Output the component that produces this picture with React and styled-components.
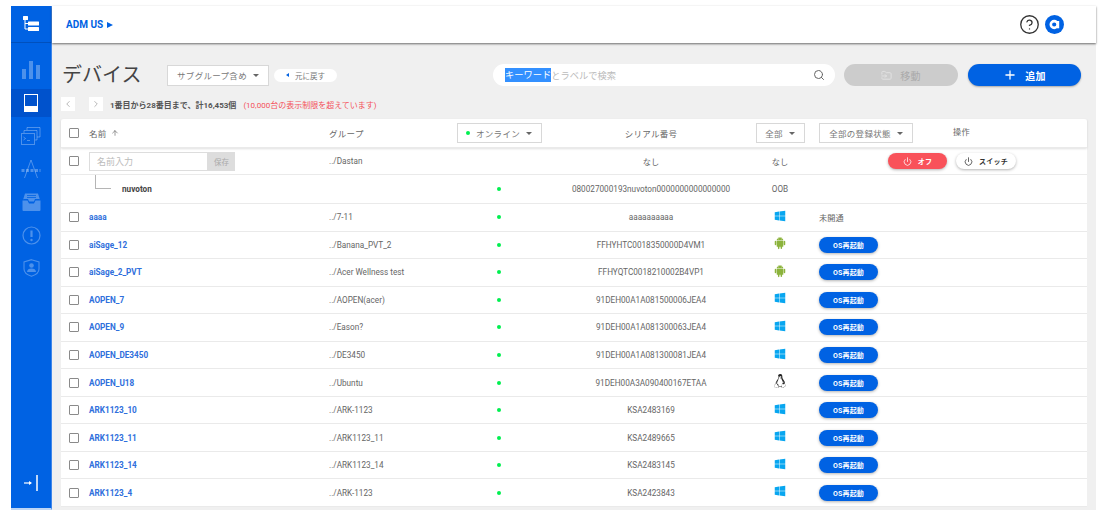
import React from "react";
import styled, { createGlobalStyle } from "styled-components";
import { Search, Plus, Power, ChevronLeft, ChevronRight, ArrowUp, CircleHelp, FolderInput } from "lucide-react";
import { FaWindows, FaLinux } from "react-icons/fa";
import { AiFillAndroid } from "react-icons/ai";

const GlobalStyle = createGlobalStyle`
  html, body { margin: 0; padding: 0; background: #fff; }
  * { box-sizing: border-box; }
  body { font-family: Roboto, "Noto Sans CJK JP", sans-serif; color: #555; }
`;

const Frame = styled.div`
  width: 1111px;
  height: 524px;
  padding: 6px 15px 14px 11px;
  display: flex;
  overflow: hidden;
`;

const Sidebar = styled.aside`
  width: 41px;
  flex: none;
  background: #0062e3;
  border-right: 1px solid #3f86ea;
  border-bottom: 2px solid #bcd5f5;
  display: flex;
  flex-direction: column;
  color: #fff;
`;

const SideHead = styled.div`
  height: 37px;
  flex: none;
  display: flex;
  align-items: center;
  justify-content: center;
  border-bottom: 1px solid #0050bd;
`;

const SideNav = styled.nav`
  padding-top: 13px;
  display: flex;
  flex-direction: column;
  gap: 5px;
  flex: 1;
`;

const SideItem = styled.div`
  height: 28px;
  display: flex;
  align-items: center;
  justify-content: center;
  background: ${(p) => (p.$active ? "#0052cc" : "transparent")};
  color: ${(p) => (p.$active ? "#fff" : "rgba(255,255,255,0.3)")};
`;

const Collapse = styled.div`
  height: 33px;
  display: flex;
  align-items: flex-start;
  justify-content: center;
`;

const Content = styled.div`
  flex: 1;
  display: flex;
  flex-direction: column;
  background: #f0f0f0;
  min-width: 0;
`;

const TopBar = styled.header`
  height: 37px;
  flex: none;
  background: #fff;
  box-shadow: 0 1px 2px rgba(0, 0, 0, 0.55);
  display: flex;
  align-items: center;
  padding: 0 32px 0 14px;
  position: relative;
`;

const Crumb = styled.div`
  font-size: 10px;
  font-weight: 700;
  color: #0062e3;
  display: flex;
  align-items: center;
  gap: 4px;
`;

const Triangle = styled.span`
  width: 0;
  height: 0;
  border-left: 6px solid #0062e3;
  border-top: 3px solid transparent;
  border-bottom: 3px solid transparent;
`;

const TopIcons = styled.div`
  margin-left: auto;
  display: flex;
  align-items: center;
  gap: 5px;
  color: #333;
`;

const Main = styled.main`
  flex: 1;
  padding: 21px 9px 3px;
  display: flex;
  flex-direction: column;
  min-height: 0;
`;

const Toolbar = styled.div`
  height: 22px;
  flex: none;
  display: flex;
  align-items: center;
  padding-left: 1px;
  padding-right: 6px;
`;

const Title = styled.h1`
  margin: 0 26px 0 0;
  width: 79px;
  font-size: 20px;
  font-weight: 400;
  color: #444;
  white-space: nowrap;
  line-height: 22px;
`;

const Select = styled.div`
  height: ${(p) => p.$h || 20}px;
  width: ${(p) => p.$w}px;
  flex: none;
  background: #fff;
  border: 1px solid #d8d8d8;
  display: flex;
  align-items: center;
  justify-content: center;
  gap: 6px;
  font-size: 8.5px;
  letter-spacing: 0.3px;
  color: #777;
  white-space: nowrap;
`;

const Caret = styled.span`
  width: 0;
  height: 0;
  border-top: 3px solid #666;
  border-left: 3px solid transparent;
  border-right: 3px solid transparent;
`;

const BackPill = styled.div`
  width: 63px;
  height: 13px;
  margin-left: 5px;
  border-radius: 7px;
  background: #fff;
  display: flex;
  align-items: center;
  justify-content: center;
  gap: 6px;
  font-size: 7.5px;
  color: #777;
`;

const BackArrow = styled.span`
  width: 0;
  height: 0;
  border-right: 3px solid #0062e3;
  border-top: 2.5px solid transparent;
  border-bottom: 2.5px solid transparent;
`;

const SearchBox = styled.div`
  width: 342px;
  height: 22px;
  margin-left: auto;
  border-radius: 11px;
  background: #fff;
  display: flex;
  align-items: center;
  padding: 0 10px 0 12px;
  font-size: 9.25px;
  color: #bbb;
  white-space: nowrap;
`;

const Selected = styled.span`
  background: #3390ff;
  color: #fff;
  line-height: 14px;
`;

const SearchIcon = styled.span`
  margin-left: auto;
  display: flex;
  color: #666;
`;

const ActionButton = styled.button`
  width: ${(p) => (p.$primary ? 113 : 114)}px;
  height: 22px;
  margin-left: ${(p) => (p.$primary ? 10 : 9)}px;
  flex: none;
  border: 0;
  padding: 0;
  border-radius: 11px;
  font-family: inherit;
  font-size: 10px;
  font-weight: ${(p) => (p.$primary ? 700 : 400)};
  letter-spacing: 0.3px;
  color: ${(p) => (p.$primary ? "#fff" : "#aaa")};
  background: ${(p) => (p.$primary ? "#0062e3" : "#ccc")};
  box-shadow: ${(p) => (p.$primary ? "0 1px 2px rgba(0,0,0,0.3)" : "none")};
  display: flex;
  align-items: center;
  justify-content: center;
  gap: 8px;
`;

const Pager = styled.div`
  height: 14px;
  flex: none;
  margin-top: 11px;
  display: flex;
  align-items: center;
  font-size: 8px;
  font-weight: 700;
  color: #555;
  white-space: nowrap;
`;

const PageBox = styled.span`
  width: 14px;
  height: 14px;
  background: #fff;
  color: #aaa;
  display: flex;
  align-items: center;
  justify-content: center;
  margin-right: ${(p) => p.$gap}px;
`;

const Limit = styled.span`
  margin-left: 7px;
  font-weight: 400;
  color: #f4505a;
`;

const Table = styled.section`
  margin-top: 8px;
  background: #fff;
  border-radius: 3px 3px 0 0;
  font-size: 8.2px;
  color: #666;
`;

const Row = styled.div`
  height: ${(p) => p.$h || 27.55}px;
  display: grid;
  grid-template-columns: 28px 240px 115px 110px 194px 64px 1fr;
  align-items: center;
  border-bottom: 1px solid #eaeaea;
  box-shadow: ${(p) => (p.$head ? "0 1px 2px rgba(0,0,0,0.12)" : "none")};
  position: relative;
`;

const Center = styled.div`
  display: flex;
  justify-content: center;
  align-items: center;
  white-space: nowrap;
  ${(p) => p.$raised && "margin-bottom: 3px;"}
`;

const Box = styled.span`
  width: 10px;
  height: 10px;
  margin-left: 8px;
  border: 1.5px solid #8a8a8a;
  border-radius: 1px;
  background: #fff;
  display: block;
`;

const HeadLabel = styled.div`
  display: flex;
  align-items: center;
  gap: 4px;
  font-size: 8.5px;
  letter-spacing: 0.3px;
  color: #666;
  white-space: nowrap;
`;

const DeviceName = styled.div`
  font-weight: 700;
  color: ${(p) => (p.$child ? "#444" : "#2f6fdc")};
  white-space: nowrap;
`;

const ChildName = styled.div`
  display: flex;
  align-items: flex-start;
  height: 100%;
`;

const Branch = styled.span`
  width: 16px;
  height: 14px;
  margin: 0 11px 0 6px;
  border-left: 1.5px solid #b5b5b5;
  border-bottom: 1.5px solid #b5b5b5;
`;

const ChildLabel = styled(DeviceName)`
  align-self: center;
`;

const NameEntry = styled.div`
  display: flex;
  height: 19px;
  width: 146px;
`;

const NameInput = styled.div`
  width: 119px;
  background: #fff;
  border: 1px solid #ddd;
  padding-left: 7px;
  display: flex;
  align-items: center;
  font-size: 9px;
  color: #bbb;
`;

const SaveButton = styled.div`
  width: 27px;
  background: #ddd;
  color: #aaa;
  font-size: 7.5px;
  display: flex;
  align-items: center;
  justify-content: center;
`;

const Dot = styled.span`
  width: 4px;
  height: 4px;
  border-radius: 50%;
  background: #00f050;
  display: block;
`;

const Ops = styled.div`
  display: flex;
  align-items: center;
  padding-left: ${(p) => p.$indent || 7}px;
  gap: ${(p) => p.$gap || 9}px;
  white-space: nowrap;
`;

const OpButton = styled.button`
  width: ${(p) => p.$w || 59}px;
  height: 16px;
  border: 0;
  padding: 0;
  border-radius: 8px;
  font-family: inherit;
  font-size: 7px;
  font-weight: 700;
  letter-spacing: 0.2px;
  display: flex;
  align-items: center;
  justify-content: center;
  gap: 6px;
  color: ${(p) => (p.$tone === "plain" ? "#333" : "#fff")};
  background: ${(p) =>
    p.$tone === "danger" ? "#f9525a" : p.$tone === "plain" ? "#fff" : "#0062e3"};
  box-shadow: 0 1px 3px rgba(0, 0, 0, 0.3);
`;

const HeadOp = styled.span`
  margin-left: 40px;
  margin-bottom: 5px;
  letter-spacing: 0.3px;
`;

const devices = [
  ["aaaa", "../7-11", "aaaaaaaaaa", "win", "none"],
  ["aiSage_12", "../Banana_PVT_2", "FFHYHTC0018350000D4VM1", "android"],
  ["aiSage_2_PVT", "../Acer Wellness test", "FFHYQTC0018210002B4VP1", "android"],
  ["AOPEN_7", "../AOPEN(acer)", "91DEH00A1A081500006JEA4", "win"],
  ["AOPEN_9", "../Eason?", "91DEH00A1A081300063JEA4", "win"],
  ["AOPEN_DE3450", "../DE3450", "91DEH00A1A081300081JEA4", "win"],
  ["AOPEN_U18", "../Ubuntu", "91DEH00A3A090400167ETAA", "linux"],
  ["ARK1123_10", "../ARK-1123", "KSA2483169", "win"],
  ["ARK1123_11", "../ARK1123_11", "KSA2489665", "win"],
  ["ARK1123_14", "../ARK1123_14", "KSA2483145", "win"],
  ["ARK1123_4", "../ARK-1123", "KSA2423843", "win"],
];

const OsIcon = ({ os }) => {
  if (os === "android") return <AiFillAndroid size={14} color="#8cb33c" />;
  if (os === "linux") return <FaLinux size={14} color="#222" />;
  return <FaWindows size={12} color="#08a6f0" />;
};

const TreeLogo = () => (
  <svg width="18" height="18" viewBox="0 0 18 18" fill="#fff">
    <rect x="1" y="1" width="5" height="4" rx="0.5" />
    <path d="M3 5v9h5M3 8.5h5" stroke="#fff" strokeWidth="1" fill="none" />
    <rect x="6" y="6.5" width="11" height="4" rx="0.5" />
    <rect x="6" y="12" width="11" height="4" rx="0.5" />
  </svg>
);

const ChartIcon = () => (
  <svg width="20" height="20" viewBox="0 0 20 20" fill="currentColor">
    <rect x="1" y="9" width="4" height="10" />
    <rect x="8" y="1" width="4" height="18" />
    <rect x="15" y="5" width="4" height="14" />
  </svg>
);

const DeviceIcon = () => (
  <svg width="14" height="18" viewBox="0 0 14 18">
    <rect x="0.5" y="0.5" width="13" height="17" fill="#0052cc" stroke="#fff" />
    <rect x="0" y="12" width="14" height="6" fill="#fff" />
  </svg>
);

const TerminalIcon = () => (
  <svg width="20" height="18" viewBox="0 0 20 18" fill="none" stroke="currentColor" strokeWidth="1">
    <rect x="0.5" y="6.5" width="13" height="11" />
    <path d="M3 6V3.5h13V13h-2M6 3V0.5h13V10h-3" />
    <path d="M2.5 10l2 1.500-2 1.500M6 13.500h3" />
  </svg>
);

const AppsIcon = () => (
  <svg width="20" height="18" viewBox="0 0 20 18" fill="none" stroke="currentColor" strokeWidth="1">
    <path d="M10 0L3.500 18M10 0l6.500 18" />
    <path d="M0.500 10.500h19" strokeWidth="3" strokeDasharray="3 1.500" />
  </svg>
);

const InboxIcon = () => (
  <svg width="19" height="18" viewBox="0 0 19 18" fill="currentColor">
    <path d="M3 0.500h13l2 6.500v-1H13l-1 2.500H7L6 6H1v1z" />
    <path d="M0.500 7.500H5.500l1.500 3h5l1.500-3h5V17a1 1 0 0 1-1 1H1.500a1 1 0 0 1-1-1z" />
    <path d="M5 2.500h9M5 4.500h9" stroke="#0062e3" strokeWidth="0.800" />
  </svg>
);

const AlertIcon = () => (
  <svg width="19" height="19" viewBox="0 0 19 19" fill="none" stroke="currentColor">
    <circle cx="9.500" cy="9.500" r="8.500" strokeWidth="1.200" />
    <path d="M9.500 4.500v6.500" strokeWidth="2.200" />
    <circle cx="9.500" cy="14" r="1.200" fill="currentColor" stroke="none" />
  </svg>
);

const ShieldIcon = () => (
  <svg width="17" height="18" viewBox="0 0 17 18" fill="none" stroke="currentColor">
    <path d="M8.500 0.700L16 3v7c0 3.500-3.500 6-7.500 7.300C4.500 16 1 13.500 1 10V3z" strokeWidth="1.100" />
    <circle cx="8.500" cy="6.500" r="2.300" fill="currentColor" stroke="none" />
    <path d="M4 13c0-2.500 2-3.500 4.500-3.500S13 10.500 13 13z" fill="currentColor" stroke="none" />
  </svg>
);

const CollapseIcon = () => (
  <svg width="14" height="16" viewBox="0 0 14 16" fill="none" stroke="#fff">
    <path d="M0 8h7" strokeWidth="1.200" />
    <path d="M5 6l3 2-3 2z" fill="#fff" stroke="none" />
    <path d="M13 0v16" strokeWidth="1.500" />
  </svg>
);

const AccountIcon = () => (
  <svg width="19" height="19" viewBox="0 0 19 19">
    <circle cx="9.500" cy="9.500" r="9.500" fill="#0062e3" />
    <circle cx="9.200" cy="9.500" r="3.400" fill="none" stroke="#fff" strokeWidth="2.600" />
    <rect x="12" y="6" width="2.200" height="7.300" fill="#fff" />
  </svg>
);

const App = () => (
  <>
    <GlobalStyle />
    <Frame>
      <Sidebar>
        <SideHead>
          <TreeLogo />
        </SideHead>
        <SideNav>
          <SideItem><ChartIcon /></SideItem>
          <SideItem $active><DeviceIcon /></SideItem>
          <SideItem><TerminalIcon /></SideItem>
          <SideItem><AppsIcon /></SideItem>
          <SideItem><InboxIcon /></SideItem>
          <SideItem><AlertIcon /></SideItem>
          <SideItem><ShieldIcon /></SideItem>
        </SideNav>
        <Collapse>
          <CollapseIcon />
        </Collapse>
      </Sidebar>
      <Content>
        <TopBar>
          <Crumb>
            ADM US <Triangle />
          </Crumb>
          <TopIcons>
            <CircleHelp size={21} strokeWidth={1.5} />
            <AccountIcon />
          </TopIcons>
        </TopBar>
        <Main>
          <Toolbar>
            <Title>デバイス</Title>
            <Select $w={102} $h={21}>
              サブグループ含め <Caret />
            </Select>
            <BackPill>
              <BackArrow /> 元に戻す
            </BackPill>
            <SearchBox>
              <Selected>キーワード</Selected>とラベルで検索
              <SearchIcon>
                <Search size={12} />
              </SearchIcon>
            </SearchBox>
            <ActionButton>
              <FolderInput size={11} color="#e4e4e4" /> 移動
            </ActionButton>
            <ActionButton $primary>
              <Plus size={14} strokeWidth={2.2} /> 追加
            </ActionButton>
          </Toolbar>
          <Pager>
            <PageBox $gap={14}><ChevronLeft size={10} /></PageBox>
            <PageBox $gap={7}><ChevronRight size={10} /></PageBox>
            1番目から28番目まで、計16,453個
            <Limit>(10,000台の表示制限を超えています)</Limit>
          </Pager>
          <Table>
            <Row $h={29} $head>
              <Box />
              <HeadLabel>
                名前 <ArrowUp size={8} />
              </HeadLabel>
              <HeadLabel>グループ</HeadLabel>
              <Center>
                <Select $w={85}>
                  <Dot /> オンライン <Caret />
                </Select>
              </Center>
              <Center>
                <HeadLabel>シリアル番号</HeadLabel>
              </Center>
              <Center>
                <Select $w={49}>
                  全部 <Caret />
                </Select>
              </Center>
              <Ops $gap={0.01}>
                <Select $w={94}>
                  全部の登録状態 <Caret />
                </Select>
                <HeadOp>操作</HeadOp>
              </Ops>
            </Row>
            <Row $h={27}>
              <Box />
              <NameEntry>
                <NameInput>名前入力</NameInput>
                <SaveButton>保存</SaveButton>
              </NameEntry>
              <div>../Dastan</div>
              <div />
              <Center>なし</Center>
              <Center>なし</Center>
              <Ops $indent={76}>
                <OpButton $tone="danger">
                  <Power size={9} /> オフ
                </OpButton>
                <OpButton $tone="plain" $w={60}>
                  <Power size={9} /> スイッチ
                </OpButton>
              </Ops>
            </Row>
            <Row $h={29}>
              <div />
              <ChildName>
                <Branch />
                <ChildLabel $child>nuvoton</ChildLabel>
              </ChildName>
              <div />
              <Center><Dot /></Center>
              <Center>080027000193nuvoton0000000000000000</Center>
              <Center>OOB</Center>
              <div />
            </Row>
            {devices.map(([name, group, serial, os, op]) => (
              <Row key={name}>
                <Box />
                <DeviceName>{name}</DeviceName>
                <div>{group}</div>
                <Center><Dot /></Center>
                <Center>{serial}</Center>
                <Center $raised><OsIcon os={os} /></Center>
                <Ops>
                  {op === "none" ? "未開通" : <OpButton>OS再起動</OpButton>}
                </Ops>
              </Row>
            ))}
          </Table>
        </Main>
      </Content>
    </Frame>
  </>
);

export default App;
